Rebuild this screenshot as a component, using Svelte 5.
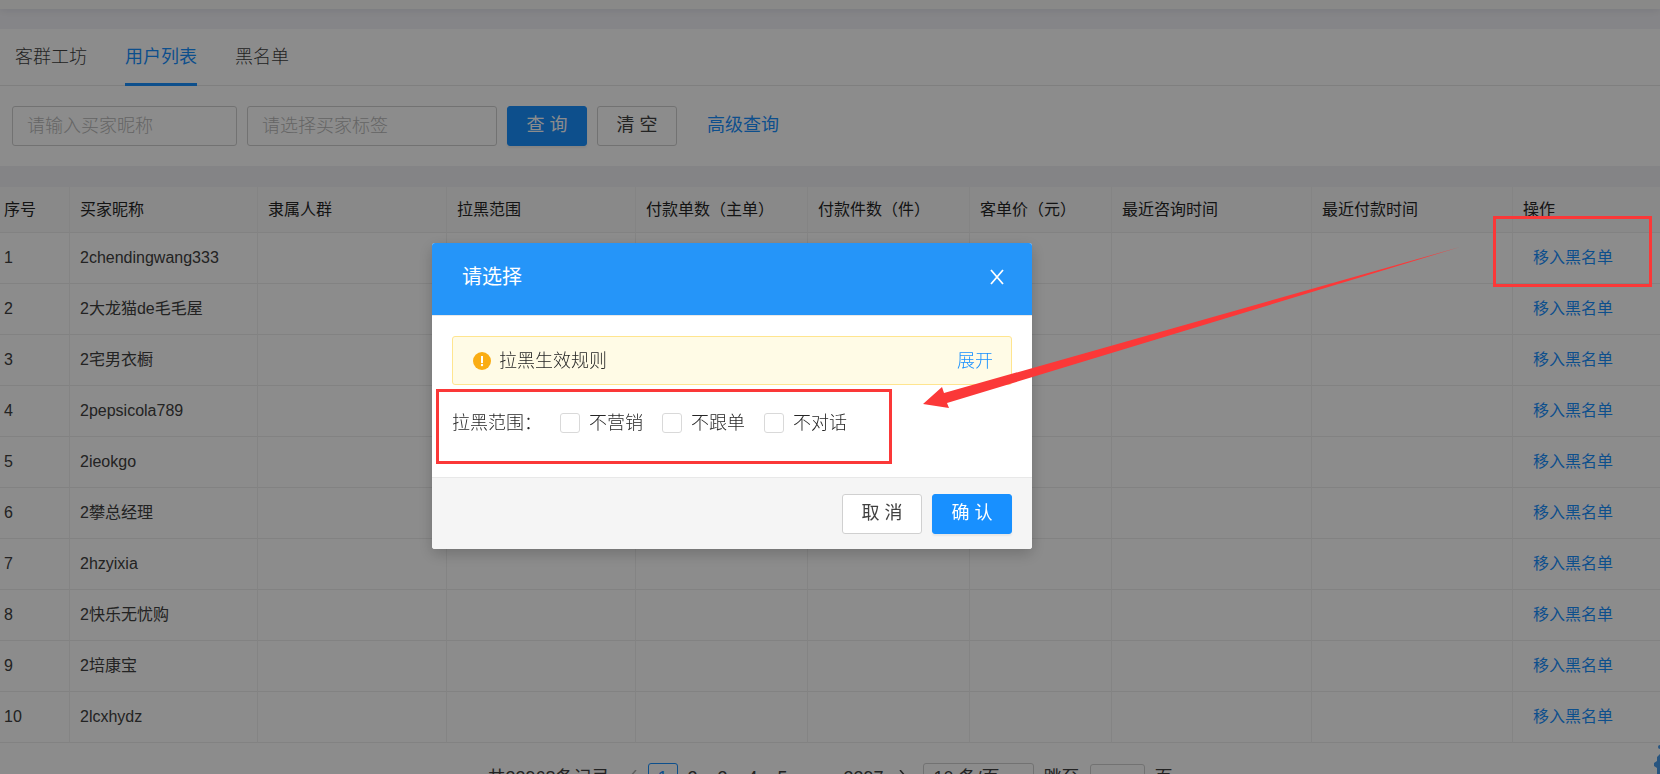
<script>
let nickname = '';
let tag = '';
let jumpPage = '';
let pageSize = '10';
let currentPage = 1;
let activeTab = '用户列表';
let modalOpen = true;

const tabs = ['客群工坊', '用户列表', '黑名单'];

const columns = [
    { title: '序号', width: 70 },
    { title: '买家昵称', width: 188 },
    { title: '隶属人群', width: 189 },
    { title: '拉黑范围', width: 189 },
    { title: '付款单数（主单）', width: 172 },
    { title: '付款件数（件）', width: 162 },
    { title: '客单价（元）', width: 142 },
    { title: '最近咨询时间', width: 200 },
    { title: '最近付款时间', width: 201 },
    { title: '操作', width: 147 }
];

const buyers = [
    '2chendingwang333',
    '2大龙猫de毛毛屋',
    '2宅男衣橱',
    '2pepsicola789',
    '2ieokgo',
    '2攀总经理',
    '2hzyixia',
    '2快乐无忧购',
    '2培康宝',
    '2lcxhydz'
];

let scopes = [
    { id: 'marketing', label: '不营销', checked: false },
    { id: 'follow', label: '不跟单', checked: false },
    { id: 'chat', label: '不对话', checked: false }
];

function clearSearch() {
    nickname = '';
    tag = '';
}

function closeModal() {
    modalOpen = false;
}
</script>

<div class="page">
    <div class="topbar"></div>

    <div class="panel">
        <nav class="tabs">
            {#each tabs as tab}
                <button
                    class="tab"
                    class:active={tab === activeTab}
                    on:click={() => (activeTab = tab)}
                >{tab}</button>
            {/each}
        </nav>

        <form class="search" on:submit|preventDefault>
            <input
                class="input nickname"
                type="text"
                aria-label="买家昵称"
                placeholder="请输入买家昵称"
                bind:value={nickname}
            />
            <input
                class="input tag"
                type="text"
                aria-label="买家标签"
                placeholder="请选择买家标签"
                bind:value={tag}
            />
            <button class="btn btn-primary" type="submit">查 询</button>
            <button class="btn" type="button" on:click={clearSearch}>清 空</button>
            <a class="advanced" href="#advanced">高级查询</a>
        </form>
    </div>

    <div class="list">
        <table>
            <colgroup>
                {#each columns as col}
                    <col style="width: {col.width}px" />
                {/each}
            </colgroup>
            <thead>
                <tr>
                    {#each columns as col}
                        <th>{col.title}</th>
                    {/each}
                </tr>
            </thead>
            <tbody>
                {#each buyers as buyer, i}
                    <tr>
                        <td>{i + 1}</td>
                        <td>{buyer}</td>
                        <td></td>
                        <td></td>
                        <td></td>
                        <td></td>
                        <td></td>
                        <td></td>
                        <td></td>
                        <td><a class="action" href="#blacklist">移入黑名单</a></td>
                    </tr>
                {/each}
            </tbody>
        </table>

        <div class="pagination">
            <span class="total">共33968条记录</span>
            <button class="page-item" aria-label="上一页">
                <svg width="14" height="14" viewBox="0 0 14 14"><path d="M10 0L4 7l6 7" fill="none" stroke="#b0b0b0" stroke-width="1.5" /></svg>
            </button>
            {#each [1, 2, 3, 4, 5] as n}
                <button
                    class="page-item"
                    class:current={n === currentPage}
                    on:click={() => (currentPage = n)}
                >{n}</button>
            {/each}
            <span class="ellipsis">•••</span>
            <button class="page-item last">3397</button>
            <button class="page-item" aria-label="下一页">
                <svg width="14" height="14" viewBox="0 0 14 14"><path d="M4 0l6 7-6 7" fill="none" stroke="#404040" stroke-width="1.5" /></svg>
            </button>
            <select class="size" aria-label="每页条数" bind:value={pageSize}>
                <option value="10">10 条/页</option>
                <option value="20">20 条/页</option>
            </select>
            <label class="jump">跳至 <input type="text" bind:value={jumpPage} /> 页</label>
        </div>
    </div>

    <!-- floating helper peeking in from the right edge -->
    <svg class="helper" width="6" height="30" viewBox="0 0 6 30">
        <circle cx="6" cy="3" r="2" fill="#4a9bea" />
        <path d="M6 10L3 13v4L0 19v3l3 2v6h3z" fill="#4a9bea" />
    </svg>
</div>

{#if modalOpen}
    <div class="mask">
        <div class="modal" role="dialog" aria-modal="true" aria-labelledby="modal-title">
            <header class="modal-header">
                <h2 id="modal-title">请选择</h2>
                <button class="close" aria-label="关闭" on:click={closeModal}>
                    <svg width="14" height="16" viewBox="0 0 14 16"><path d="M1 1l12 14M13 1L1 15" fill="none" stroke="#fff" stroke-width="1.8" /></svg>
                </button>
            </header>

            <div class="modal-body">
                <div class="alert">
                    <svg width="18" height="18" viewBox="0 0 18 18">
                        <circle cx="9" cy="9" r="9" fill="#faad14" />
                        <rect x="8" y="4" width="2" height="7" fill="#fff" />
                        <circle cx="9" cy="13" r="1.2" fill="#fff" />
                    </svg>
                    <span>拉黑生效规则</span>
                    <a href="#rules">展开</a>
                </div>

                <div class="scope">
                    <span class="scope-title">拉黑范围：</span>
                    {#each scopes as scope}
                        <label class="check" for={scope.id}>
                            <input id={scope.id} type="checkbox" bind:checked={scope.checked} />
                            {scope.label}
                        </label>
                    {/each}
                </div>
            </div>

            <footer class="modal-footer">
                <button class="btn" on:click={closeModal}>取 消</button>
                <button class="btn btn-primary" on:click={closeModal}>确 认</button>
            </footer>
        </div>
    </div>
{/if}

<!-- guide marks: action cell -> scope options -->
<svg class="guide" width="1660" height="774" viewBox="0 0 1660 774">
    <rect x="1494.5" y="217.5" width="156" height="68" />
    <rect x="437.5" y="390.5" width="453" height="72" />
    <path d="M923 404L942 387L944 393L1460 247L947 403L949 408z" />
</svg>

<style>
:global(body) {
    overflow: hidden;
    background: #fff;
    color: #404040;
    font: 18px/28px "Liberation Sans", "Noto Sans CJK SC", sans-serif;
}

button,
input,
select {
    box-sizing: border-box;
    font: inherit;
    color: inherit;
}

a {
    color: #1890ff;
    text-decoration: none;
}

.page {
    height: 100vh;
    overflow: hidden;
}

.topbar {
    position: relative;
    height: 9px;
    background: #fafaf8;
    box-shadow: 0 1px 10px rgba(0, 21, 41, 0.1);
}

.panel {
    border-top: 20px solid #f3f3f8;
}

.tabs {
    display: flex;
    gap: 38px;
    padding: 0 15px;
    border-bottom: 1px solid #e8e8e8;
}

.tab {
    height: 57px;
    margin-bottom: -1px;
    padding: 2px 0 0;
    border: 0;
    border-bottom: 3px solid transparent;
    background: none;
    color: #404040;
    font-weight: 300;
    cursor: pointer;
}

.tab.active {
    border-color: #1890ff;
    color: #1890ff;
    font-weight: 400;
}

.search {
    display: flex;
    align-items: center;
    gap: 10px;
    padding: 20px 12px;
}

.input {
    height: 40px;
    padding: 0 14px;
    border: 1px solid #d0d0d0;
    border-radius: 3px;
    background: #fff;
    font-weight: 300;
}

.input::placeholder {
    color: #b8b8b8;
    opacity: 1;
}

.nickname {
    width: 225px;
}

.tag {
    width: 250px;
}

.btn {
    width: 80px;
    height: 40px;
    padding: 0 0 2px;
    border: 1px solid #d0d0d0;
    border-radius: 3px;
    background: #fff;
    cursor: pointer;
}

.btn-primary {
    border-color: #1890ff;
    background: #1890ff;
    box-shadow: 0 2px 2px rgba(0, 0, 0, 0.06);
    color: #fff;
}

.advanced {
    margin-left: 20px;
    padding-bottom: 2px;
}

.list {
    border-top: 21px solid #f0f0f4;
}

table {
    width: 100%;
    border-collapse: separate;
    border-spacing: 0;
    table-layout: fixed;
    font-size: 16px;
    line-height: 24px;
}

th,
td {
    box-sizing: border-box;
    height: 51px;
    padding: 0 10px;
    border-right: 1px solid #f0f0f0;
    border-bottom: 1px solid #ededed;
    text-align: left;
    white-space: nowrap;
}

th {
    height: 46px;
    background: #fafafa;
    color: #262626;
    font-weight: 400;
}

th:first-child,
td:first-child {
    padding-left: 4px;
}

th:last-child,
td:last-child {
    border-right: 0;
}

.action {
    padding-left: 10px;
}

.pagination {
    display: flex;
    justify-content: center;
    align-items: center;
    padding: 20px 0;
}

.page-item {
    width: 30px;
    height: 30px;
    padding: 0;
    border: 1px solid transparent;
    border-radius: 3px;
    background: none;
}

.page-item.current {
    border-color: #1890ff;
    color: #1890ff;
}

.page-item.last {
    width: 48px;
}

.total {
    margin-right: 8px;
}

.ellipsis {
    width: 42px;
    text-align: center;
    font-size: 10px;
}

.size {
    width: 111px;
    height: 30px;
    margin: 0 10px 0 5px;
    padding: 0 10px;
    border: 1px solid #d0d0d0;
    border-radius: 3px;
    background: #fff;
    appearance: none;
}

.jump {
    display: flex;
    align-items: center;
    gap: 10px;
}

.jump input {
    width: 55px;
    height: 28px;
    border: 1px solid #d0d0d0;
    border-radius: 3px;
}

.helper {
    position: fixed;
    right: 0;
    bottom: 0;
}

.mask {
    position: fixed;
    inset: 0;
    background: rgba(0, 0, 0, 0.45);
}

.modal {
    width: 600px;
    margin: 243px 0 0 432px;
    overflow: hidden;
    border-radius: 3px;
    background: #fff;
    box-shadow: 0 5px 15px rgba(0, 0, 0, 0.2);
}

.modal-header {
    display: flex;
    justify-content: space-between;
    align-items: center;
    height: 68px;
    padding: 0 28px 4px 30px;
    border-bottom: 1px solid #e8e8e8;
    background: #2595f9;
    color: #fff;
}

.modal-header h2 {
    margin: 0;
    font-size: 20px;
    font-weight: 400;
}

.close {
    display: flex;
    padding: 0;
    border: 0;
    background: none;
    cursor: pointer;
}

.modal-body {
    padding: 20px 20px 34px;
    color: #262626;
    font-weight: 300;
}

.alert {
    display: flex;
    align-items: center;
    gap: 8px;
    box-sizing: border-box;
    height: 49px;
    padding: 0 18px 0 20px;
    border: 1px solid #ffe58f;
    border-radius: 3px;
    background: #fffbe6;
}

.alert a {
    margin-left: auto;
}

.scope {
    display: flex;
    align-items: center;
    height: 40px;
    margin-top: 18px;
}

.scope-title {
    margin-right: 18px;
}

.check {
    display: flex;
    align-items: center;
    gap: 9px;
    margin-right: 19px;
}

.check input {
    appearance: none;
    width: 20px;
    height: 20px;
    margin: 0;
    border: 1px solid #d9d9d9;
    border-radius: 3px;
    background: #fff;
}

.check input:checked {
    border-color: #1890ff;
    background: #1890ff;
}

.modal-footer {
    display: flex;
    justify-content: flex-end;
    gap: 10px;
    padding: 16px 20px 15px;
    border-top: 1px solid #e8e8e8;
    background: #f5f5f5;
}

.guide {
    position: absolute;
    top: 0;
    left: 0;
    pointer-events: none;
}

.guide rect {
    fill: none;
    stroke: #fb3838;
    stroke-width: 3;
}

.guide path {
    fill: #fb3838;
}
</style>
